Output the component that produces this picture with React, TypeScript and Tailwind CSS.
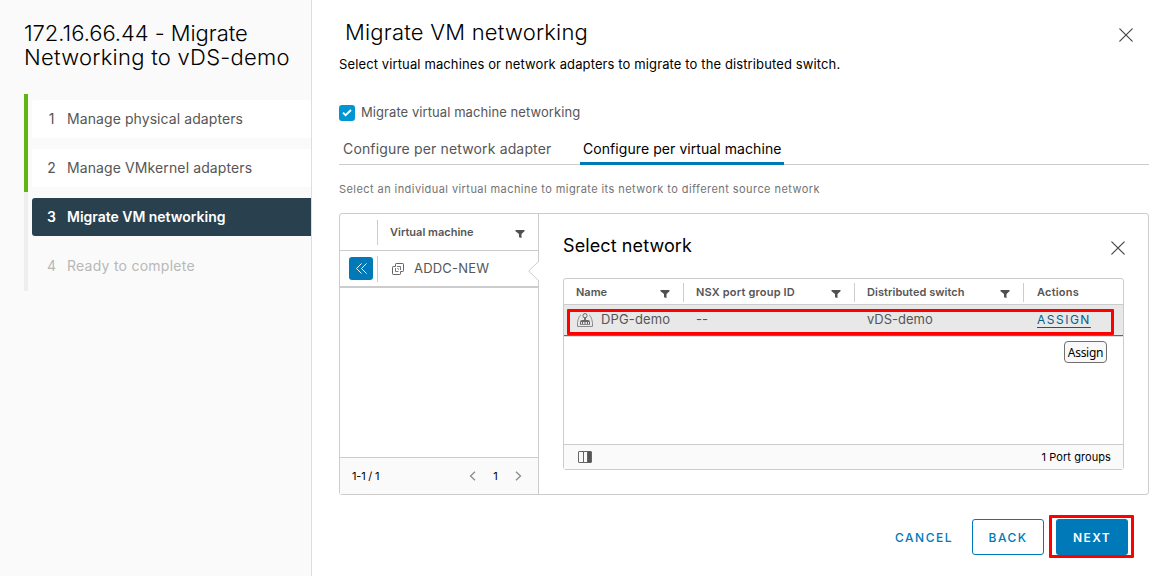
import React from "react";

const steps = [
  { n: 1, label: "Manage physical adapters", state: "done", spacing: "tracking-[0.08px]" },
  { n: 2, label: "Manage VMkernel adapters", state: "done", spacing: "tracking-[0.11px]" },
  { n: 3, label: "Migrate VM networking", state: "current", spacing: "tracking-[-0.02px]" },
  { n: 4, label: "Ready to complete", state: "todo", spacing: "tracking-[0.25px]" },
];

const stateClass: Record<string, string> = {
  done: "bg-white text-[#565656]",
  current: "bg-[#29414e] font-semibold text-white",
  todo: "text-[#b8b8b8]",
};

function Close() {
  return (
    <svg width="14" height="14" viewBox="0 0 14 14" fill="none" stroke="#454545" strokeWidth="1.2" strokeLinecap="round">
      <path d="M.8.8l12.4 12.4M13.2.8L.8 13.2" />
    </svg>
  );
}

function Filter() {
  return (
    <svg width="10" height="8" viewBox="0 0 10 8" fill="#505050" className="mt-[3px] shrink-0">
      <path d="M.5 0h9v1.300L6.500 4V8L4 7.200V4L.5 1.300z" />
    </svg>
  );
}

function VmIcon() {
  return (
    <svg width="12" height="12" viewBox="0 0 12 12" fill="none" stroke="#666" strokeWidth="1">
      <path d="M3.500 3.500V1.200q0-.7.7-.7h6.600q.7 0 .7.700v6.600q0 .7-.7.700H8.500" />
      <path d="M3.500 3.500H1.200q-.7 0-.7.700v6.600q0 .7.7.700h6.600q.7 0 .7-.700V8.500" />
      <path d="M3.500 5v3.500H6.500M5 3.500h3.500V7" stroke="#777" />
      <path d="M5 5.500h1.500V7" stroke="#aaa" />
    </svg>
  );
}

function PortGroupIcon() {
  return (
    <svg width="16" height="15" viewBox="0 0 16 15" fill="none" stroke="#666" strokeWidth="1">
      <path d="M4 2C2.500 2.300 1.500 5 .5 9.500V13.500h15V9.500C14.500 5 13.500 2.300 12 2" stroke="#8a8a8a" />
      <circle cx="8" cy="2.700" r="2.100" />
      <path d="M8 4.800V7.500" strokeWidth="1.800" />
      <path d="M3.500 11.800V8.500Q3.500 7.500 4.500 7.500h7q1 0 1 1v3.300M5.500 11.800V8.500M8 11.800V8M10.500 11.800V8.500" />
      <path d="M3 11.500h10" stroke="#8a8a8a" />
      <path d="M4 8.500h8" />
    </svg>
  );
}

function HeaderCell({ label, className, filter = true }: { label: string; className: string; filter?: boolean }) {
  return (
    <div className={`flex items-center justify-between ${className}`}>
      <span className="whitespace-nowrap">{label}</span>
      {filter && <Filter />}
    </div>
  );
}

export default function App() {
  return (
    <div className="flex h-[576px] w-[1152px] overflow-hidden bg-white font-['Inter','Liberation_Sans',sans-serif] text-[13px] text-[#565656]">
      <aside className="w-[312px] shrink-0 border-r border-[#dedede] bg-[#fafafa] pt-[21px]">
        <h1 className="h-[73px] pl-6 text-[22px] leading-6 font-light whitespace-nowrap text-black">
          <span className="block tracking-[-0.05px]">172.16.66.44 - Migrate</span>
          <span className="block tracking-[0.26px]">Networking to vDS-demo</span>
        </h1>
        <ol className="ml-6">
          {steps.map((s) => (
            <li
              key={s.n}
              className={`flex h-[49px] border-l-4 pt-1.5 pl-1 last:h-[50px] ${s.state === "done" ? "border-[#60b515]" : "border-[#eeeeee]"}`}
            >
              <div className={`flex h-[38px] flex-1 items-center rounded-l-[3px] pb-0.5 text-[14px] ${stateClass[s.state]}`}>
                <span className="w-[35px] pl-[5px] text-center">
                  <span className="block w-[29px]">{s.n}</span>
                </span>
                <span className={`whitespace-nowrap ${s.spacing}`}>{s.label}</span>
              </div>
            </li>
          ))}
        </ol>
      </aside>

      <main className="flex w-[837px] flex-col pl-[27px]">
        <div className="mt-5 flex h-[25px] items-center justify-between pr-4">
          <h2 className="pl-[6px] text-[22px] leading-[25px] font-light tracking-[0.21px] whitespace-nowrap text-black">
            Migrate VM networking
          </h2>
          <div className="mt-1">
            <Close />
          </div>
        </div>
        <p className="mt-[9px] mb-px h-5 leading-5 tracking-[0.12px] whitespace-nowrap text-black">
          Select virtual machines or network adapters to migrate to the distributed switch.
        </p>
        <label className="mt-7 flex h-5 items-center gap-1.5">
          <span className="flex size-4 items-center justify-center rounded-[3px] bg-[#0095d3]">
            <svg width="10" height="8" viewBox="0 0 10 8" fill="none" stroke="#fff" strokeWidth="2">
              <path d="M1 3.600l2.600 2.600L9 1" />
            </svg>
          </span>
          <span className="tracking-[0.07px] whitespace-nowrap">Migrate virtual machine networking</span>
        </label>
        <div className="mt-[10px] flex h-8 border-b border-[#cccccc] text-[14px]">
          <div className="w-[241px] pl-1 leading-8 tracking-[0.15px] whitespace-nowrap">Configure per network adapter</div>
          <div className="h-8 w-[204px] border-b-3 border-[#0079b8] pl-[3px] leading-8 tracking-[0.07px] whitespace-nowrap text-black">
            Configure per virtual machine
          </div>
        </div>
        <p className="mt-[14px] h-5 text-[11px] leading-5 tracking-[0.43px] whitespace-nowrap text-[#737373]">
          Select an individual virtual machine to migrate its network to different source network
        </p>

        <section className="mt-[14px] flex h-[282px] rounded-[3px] border border-[#cccccc]">
          <div className="flex w-[199px] shrink-0 flex-col border-r border-[#cccccc]">
            <div className="flex h-[37px] items-center border-b border-[#cccccc] text-[11px] font-semibold">
              <div className="h-[25px] w-[38px] border-r border-[#cccccc]" />
              <HeaderCell label="Virtual machine" className="flex-1 pr-[13px] pl-3" />
            </div>
            <div className="relative flex h-[37px] items-center border-b-2 border-[#cccccc]">
              <div className="flex h-[26px] w-[38px] items-center border-r border-[#cccccc] pl-[9px]">
                <button className="flex h-[23px] w-6 items-center justify-center rounded-[3px] bg-[#0079b8]">
                  <svg width="11" height="11" viewBox="0 0 11 11" fill="none" stroke="#fff" strokeWidth="1">
                    <path d="M5.500.5l-5 5 5 5M10.500.5l-5 5 5 5" />
                  </svg>
                </button>
              </div>
              <div className="flex items-center gap-[10px] pl-[14px]">
                <VmIcon />
                <span className="tracking-[0.2px]">ADDC-NEW</span>
              </div>
              <svg width="11" height="20" viewBox="0 0 11 20" className="absolute top-[10px] -right-px" fill="#fff" stroke="#cccccc">
                <path d="M11 0L.7 10L11 20" />
              </svg>
            </div>
            <div className="flex-1" />
            <div className="flex h-[37px] items-center border-t border-[#cccccc] bg-[#fafafa] pr-4 pl-3 text-[11px] tracking-[-0.2px] text-black">
              <span className="flex-1">1-1 / 1</span>
              <svg width="7" height="10" viewBox="0 0 7 10" fill="none" stroke="#8c8c8c" strokeWidth="1.300">
                <path d="M6 .7L1.500 5L6 9.300" />
              </svg>
              <span className="w-[39px] text-center">1</span>
              <svg width="7" height="10" viewBox="0 0 7 10" fill="none" stroke="#8c8c8c" strokeWidth="1.300">
                <path d="M1 .7L5.500 5L1 9.300" />
              </svg>
            </div>
          </div>

          <div className="flex-1 pr-6 pl-6">
            <div className="mt-5 flex h-6 items-center justify-between">
              <h3 className="text-[18px] leading-6 tracking-[0.1px] text-black">Select network</h3>
              <div className="mt-1 -mr-px">
                <Close />
              </div>
            </div>
            <div className="relative mt-5 flex h-[192px] flex-col rounded-[3px] border border-[#cccccc]">
              <div className="flex h-[26px] items-center border-b border-[#cccccc] pt-px text-[11px] font-semibold">
                <HeaderCell label="Name" className="h-[19px] w-[120px] border-r border-[#cccccc] pr-[13px] pl-3" />
                <HeaderCell
                  label="NSX port group ID"
                  className="h-[19px] w-[171px] border-r border-[#cccccc] pr-[13px] pl-3 tracking-[0.18px]"
                />
                <HeaderCell
                  label="Distributed switch"
                  className="h-[19px] w-[169px] border-r border-[#cccccc] pr-[13px] pl-3 tracking-[0.05px]"
                />
                <HeaderCell label="Actions" className="pl-[13px] tracking-[0.2px]" filter={false} />
              </div>
              <div className="flex h-[31px] border-b border-[#666] bg-[#e8e8e8] leading-[29px]">
                <div className="flex w-[120px] items-center gap-2 pl-[13px]">
                  <PortGroupIcon />
                  <span className="pb-px tracking-[0.15px]">DPG-demo</span>
                </div>
                <div className="w-[171px] pl-3">--</div>
                <div className="w-[169px] pl-3">vDS-demo</div>
                <div className="pl-[13px] text-[12px] tracking-[1.500px] text-[#00608a]">
                  <span className="underline decoration-1 underline-offset-3">ASSIGN</span>
                </div>
              </div>
              <div className="h-px bg-[#dddddd]" />
              <div className="flex-1" />
              <div className="flex h-[25px] items-center justify-between border-t border-[#cccccc] bg-[#fafafa] pr-3 pl-[14px] text-[11px] tracking-[0.08px] text-black">
                <svg width="14" height="12" viewBox="0 0 14 12" fill="none" stroke="#666">
                  <rect x=".5" y=".5" width="13" height="11" rx=".5" />
                  <path d="M5.500 0v12M9.500 0v12" />
                  <path d="M10.500 1h2v10h-2z" fill="#565656" stroke="#565656" />
                </svg>
                <span>1 Port groups</span>
              </div>
              <div className="absolute top-[30px] left-[3px] h-[26px] w-[547px] rounded-[1px] border-3 border-[#ff0000]" />
              <div className="absolute top-[62px] left-[500px] flex h-[22px] w-[43px] items-center justify-center rounded-[4px] border border-[#707070] bg-[#f9f9fb] pt-px font-['Noto_Sans',sans-serif] text-[12px] tracking-[-0.3px] text-black">
                Assign
              </div>
            </div>
          </div>
        </section>

        <footer className="mt-6 flex h-9 items-center justify-end pr-[21px] text-[12px] font-medium text-[#0079b8]">
          <button className="mr-[19px] pt-px tracking-[1.500px]">CANCEL</button>
          <button className="mr-3 h-9 w-[72px] rounded-[3px] border border-[#0079b8] pt-px tracking-[1.500px]">BACK</button>
          <div className="relative">
            <button className="h-9 w-[72px] rounded-[3px] bg-[#0079b8] pt-px font-semibold tracking-[1.400px] text-white">NEXT</button>
            <div className="absolute -top-1 -left-[7px] h-[43px] w-[85px] rounded-[1px] border-3 border-[#ff0000]" />
          </div>
        </footer>
      </main>
    </div>
  );
}
